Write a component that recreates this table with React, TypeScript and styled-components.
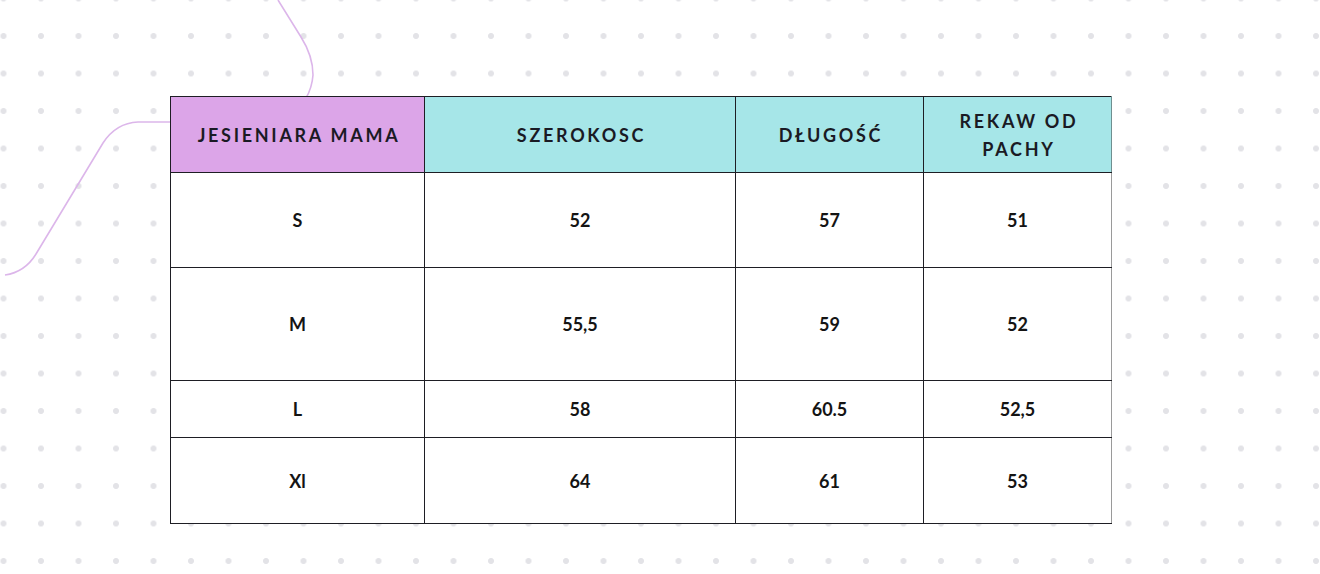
import React from "react";
import styled, { createGlobalStyle } from "styled-components";

const Global = createGlobalStyle`
  html, body { margin: 0; padding: 0; background: #ffffff; }
  body { font-family: "Lato", "Open Sans", sans-serif; }
`;

const Page = styled.div`
  position: relative;
  width: 1320px;
  height: 574px;
  overflow: hidden;
  box-sizing: border-box;
  padding: 96px 0 0 170px;
  background-color: #ffffff;
  background-image: radial-gradient(circle at center, #e3e3e7 0, #e3e3e7 2.6px, rgba(255,255,255,0) 3.4px);
  background-size: 37.5px 37.5px;
  background-position: -15.25px -20.25px;
`;

const Curves = styled.svg`
  position: absolute;
  left: 0;
  top: 0;
  pointer-events: none;
`;

const Table = styled.table`
  position: relative;
  border-collapse: collapse;
  table-layout: fixed;
  width: 941px;
  background: #ffffff;
`;

const HeadCell = styled.th<{ $bg: string; $last?: boolean }>`
  background: ${(p) => p.$bg};
  border: 1px solid #1e1e24;
  border-right: ${(p) => (p.$last ? "1px solid #6f8f90" : "1px solid #1e1e24")};
  height: 75px;
  padding: 0 0 0 3px;
  font-family: "Lato", "Open Sans", sans-serif;
  font-weight: 700;
  font-size: 18px;
  letter-spacing: 2.7px;
  line-height: 28px;
  color: #1a1a24;
  text-align: center;
  vertical-align: middle;
`;

const Cell = styled.td<{ $h: number; $last?: boolean }>`
  border: 1px solid #1e1e24;
  border-right: ${(p) => (p.$last ? "1px solid #9a9a9a" : "1px solid #1e1e24")};
  height: ${(p) => p.$h}px;
  padding: 0;
  font-family: "Lato", "Open Sans", sans-serif;
  font-weight: 700;
  font-size: 18px;
  color: #141414;
  text-align: center;
  vertical-align: middle;
`;

const rows: { h: number; v: string[] }[] = [
  { h: 94, v: ["S", "52", "57", "51"] },
  { h: 112, v: ["M", "55,5", "59", "52"] },
  { h: 56, v: ["L", "58", "60.5", "52,5"] },
  { h: 85, v: ["Xl", "64", "61", "53"] },
];

export default function App() {
  return (
    <>
      <Global />
      <Page>
        <Curves width="1320" height="574" viewBox="0 0 1320 574">
          <path
            d="M 278 0 L 301 37 Q 313 56 313 75 Q 312 88 306 98"
            fill="none"
            stroke="#dcb6ea"
            strokeWidth="1.6"
          />
          <path
            d="M 172 122 L 138 122 Q 116 123 103 143 L 36 254 Q 25 272 5 275"
            fill="none"
            stroke="#dcb6ea"
            strokeWidth="1.6"
          />
        </Curves>
        <Table>
          <colgroup>
            <col style={{ width: 254 }} />
            <col style={{ width: 311 }} />
            <col style={{ width: 188 }} />
            <col style={{ width: 188 }} />
          </colgroup>
          <thead>
            <tr>
              <HeadCell $bg="#dca5e8">JESIENIARA MAMA</HeadCell>
              <HeadCell $bg="#a6e6e8">SZEROKOSC</HeadCell>
              <HeadCell $bg="#a6e6e8">DŁUGOŚĆ</HeadCell>
              <HeadCell $bg="#a6e6e8" $last>
                REKAW OD
                <br />
                PACHY
              </HeadCell>
            </tr>
          </thead>
          <tbody>
            {rows.map((r, i) => (
              <tr key={i}>
                {r.v.map((t, j) => (
                  <Cell key={j} $h={r.h} $last={j === 3}>
                    {t}
                  </Cell>
                ))}
              </tr>
            ))}
          </tbody>
        </Table>
      </Page>
    </>
  );
}
